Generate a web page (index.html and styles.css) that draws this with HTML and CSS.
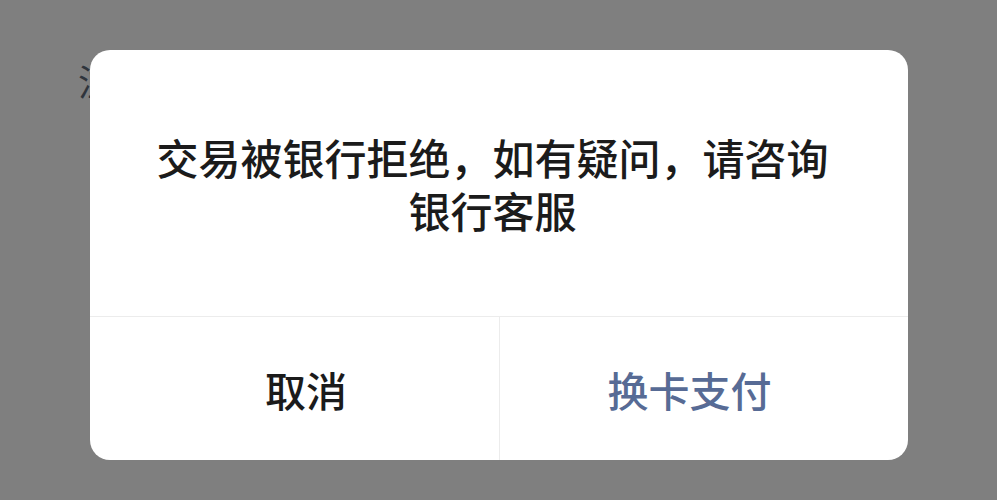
FILE: index.html
```html
<!DOCTYPE html>
<html lang="zh-CN">

<head>
    <meta charset="UTF-8">
    <meta name="viewport" content="width=device-width, initial-scale=1.0">
    <title>支付提示</title>
    <link rel="stylesheet" href="styles.css">
</head>

<body>
    <div class="page-behind">
        <span class="behind-text">注</span>
    </div>

    <div class="mask">
        <div class="dialog">
            <div class="dialog-body">
                <p class="dialog-msg">交易被银行拒绝，如有疑问，请咨询银行客服</p>
            </div>
            <div class="dialog-actions">
                <button type="button" class="btn btn-cancel">取消</button>
                <button type="button" class="btn btn-primary">换卡支付</button>
            </div>
        </div>
    </div>
</body>

</html>
```

FILE: styles.css
```css
/* Dialog over a dimmed page */
body {
    margin: 0;
    height: 500px;
    overflow: hidden;
    background-color: #7f7f7f;
    font-family: "Noto Sans CJK SC", "Noto Sans", sans-serif;
}

.page-behind {
    position: absolute;
    top: 0;
    left: 0;
    right: 0;
    bottom: 0;
}

.behind-text {
    position: absolute;
    left: 78px;
    top: 62px;
    font-size: 36px;
    line-height: 1;
    color: #2f343c;
}

.mask {
    position: relative;
    display: flex;
    justify-content: center;
    padding-top: 50px;
}

.dialog {
    width: 818px;
    height: 410px;
    background-color: #fff;
    border-radius: 20px;
    display: flex;
    flex-direction: column;
    overflow: hidden;
}

.dialog-body {
    height: 266px;
    display: flex;
    align-items: center;
    justify-content: center;
    padding: 0 76px 0 64px;
    border-bottom: 1px solid #ececec;
}

.dialog-msg {
    margin: 0;
    text-align: center;
    font-size: 42px;
    line-height: 53px;
    font-weight: 500;
    color: #1b1b1b;
}

.dialog-actions {
    flex: 1;
    display: flex;
}

.btn {
    box-sizing: border-box;
    border: none;
    background: none;
    font-family: inherit;
    font-size: 41px;
    font-weight: 500;
    cursor: pointer;
}

.btn-cancel {
    width: 410px;
    color: #1b1b1b;
    padding: 0 0 0 24px;
    border-right: 1px solid #ececec;
}

.btn-primary {
    flex: 1;
    color: #576b95;
    padding: 0 28px 0 0;
}
```
